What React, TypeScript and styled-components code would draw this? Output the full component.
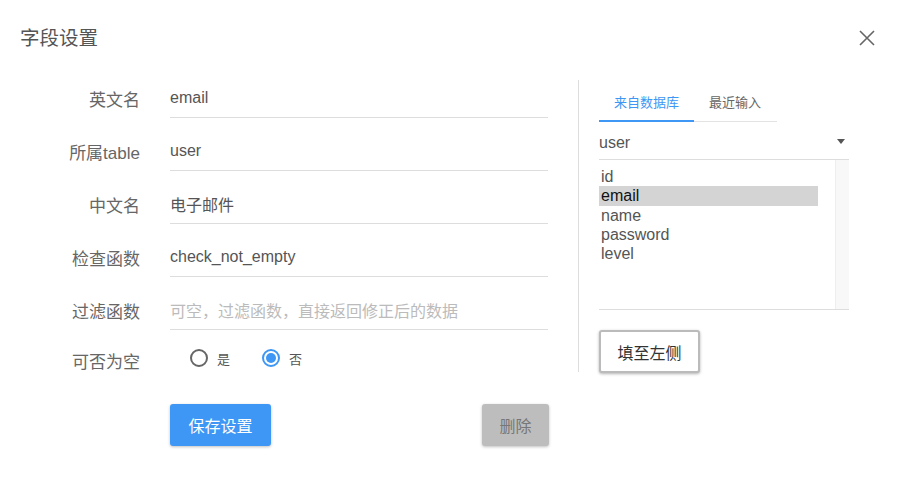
import React from "react";
import styled, { createGlobalStyle } from "styled-components";

const Global = createGlobalStyle`
  html, body { margin: 0; padding: 0; background: #fff; }
  body { font-family: "Liberation Sans", Arial, "Noto Sans CJK SC", sans-serif; }
  * { box-sizing: border-box; }
`;

const BLUE = "#3e97f5";

const Dialog = styled.div`
  width: 898px;
  height: 498px;
  background: #fff;
`;

const Header = styled.div`
  height: 78px;
  display: flex;
  align-items: flex-start;
  justify-content: space-between;
  padding: 26px 22px 0 20px;
`;

const Title = styled.div`
  font-size: 19.5px;
  line-height: 24px;
  color: #555;
`;

const Close = styled.button`
  border: 0;
  background: none;
  padding: 0;
  margin-top: 3px;
  width: 18px;
  height: 18px;
  cursor: pointer;
`;

const Main = styled.div`
  display: flex;
  align-items: flex-start;
`;

const Form = styled.div`
  width: 578px;
  display: flex;
  flex-direction: column;
  gap: 13px;
`;

const Row = styled.div<{ $compact?: boolean }>`
  display: flex;
  align-items: center;
  gap: 30px;
  height: ${(p) => (p.$compact ? "34px" : "40px")};
`;

const Label = styled.div`
  width: 140px;
  text-align: right;
  font-size: 17px;
  color: #666;
`;

const Field = styled.div<{ $placeholder?: boolean }>`
  width: 378px;
  height: 40px;
  border-bottom: 1px solid #ddd;
  display: flex;
  align-items: center;
  padding-top: 1px;
  font-size: 16px;
  color: ${(p) => (p.$placeholder ? "#bbb" : "#555")};
`;

const RadioGroup = styled.div`
  display: flex;
  align-items: center;
  gap: 32px;
  padding-left: 20px;
  margin-top: -4px;
`;

const RadioItem = styled.label`
  display: flex;
  align-items: center;
  gap: 9px;
  font-size: 13px;
  color: #555;
`;

const RadioCircle = styled.span<{ $checked?: boolean }>`
  width: 18px;
  height: 18px;
  border-radius: 50%;
  border: 2px solid ${(p) => (p.$checked ? BLUE : "#666")};
  display: flex;
  align-items: center;
  justify-content: center;
  &::after {
    content: "";
    width: 10px;
    height: 10px;
    border-radius: 50%;
    background: ${(p) => (p.$checked ? BLUE : "transparent")};
  }
`;

const Actions = styled.div`
  margin-top: 14px;
  margin-left: 170px;
  width: 379px;
  display: flex;
  justify-content: space-between;
`;

const Btn = styled.button<{ $primary?: boolean }>`
  height: 42px;
  padding: 0 ${(p) => (p.$primary ? "18.5px" : "17.5px")};
  border: 0;
  border-radius: 3px;
  font-family: inherit;
  font-size: 16px;
  background: ${(p) => (p.$primary ? BLUE : "#bdbdbd")};
  color: ${(p) => (p.$primary ? "#fff" : "#777")};
  box-shadow: 0 1px 3px rgba(0, 0, 0, 0.25);
`;

const Side = styled.div`
  margin-top: 2px;
  height: 292px;
  border-left: 1px solid #ddd;
  padding-left: 20px;
  width: 271px;
`;

const Tabs = styled.div`
  display: flex;
  width: 178px;
  height: 42px;
  border-bottom: 1px solid #e3e3e3;
`;

const Tab = styled.div<{ $active?: boolean }>`
  padding: 0 15px;
  display: flex;
  align-items: center;
  font-size: 13px;
  color: ${(p) => (p.$active ? BLUE : "#666")};
  border-bottom: 2px solid ${(p) => (p.$active ? BLUE : "transparent")};
  margin-bottom: -1px;
  padding-top: 2px;
`;

const Select = styled.div`
  width: 250px;
  height: 38px;
  border-bottom: 1px solid #ddd;
  display: flex;
  align-items: center;
  justify-content: space-between;
  padding: 5px 4px 0 0;
  font-size: 16px;
  color: #555;
`;

const Caret = styled.span`
  width: 0;
  height: 0;
  border-left: 4px solid transparent;
  border-right: 4px solid transparent;
  border-top: 5px solid #555;
  margin-bottom: 4px;
`;

const List = styled.div`
  width: 250px;
  height: 150px;
  border-bottom: 1px solid #ddd;
  display: flex;
`;

const Items = styled.div`
  flex: 1;
  padding-top: 7px;
`;

const Item = styled.div<{ $selected?: boolean }>`
  height: 19.25px;
  line-height: 19px;
  font-size: 16px;
  padding-left: 2px;
  margin-right: 17px;
  color: ${(p) => (p.$selected ? "#111" : "#555")};
  background: ${(p) => (p.$selected ? "#d4d4d4" : "transparent")};
`;

const Track = styled.div`
  width: 14px;
  background: #f8f8f8;
  border-left: 1px solid #eee;
`;

const FillBtn = styled.button`
  margin-top: 20px;
  width: 101px;
  height: 43px;
  border: 2px solid #bbb;
  border-radius: 3px;
  background: #fff;
  font-family: inherit;
  font-size: 16px;
  color: #333;
  box-shadow: 0 1px 3px rgba(0, 0, 0, 0.3);
`;

const fields = [
  { label: "英文名", value: "email" },
  { label: "所属table", value: "user" },
  { label: "中文名", value: "电子邮件" },
  { label: "检查函数", value: "check_not_empty" },
  { label: "过滤函数", value: "可空，过滤函数，直接返回修正后的数据", placeholder: true },
];

const columns = ["id", "email", "name", "password", "level"];

export default function App() {
  return (
    <Dialog>
      <Global />
      <Header>
        <Title>字段设置</Title>
        <Close aria-label="close">
          <svg width="18" height="18" viewBox="0 0 18 18">
            <path d="M2 2 L16 16 M16 2 L2 16" stroke="#666" strokeWidth="1.6" fill="none" />
          </svg>
        </Close>
      </Header>
      <Main>
        <Form>
          {fields.map((f) => (
            <Row key={f.label}>
              <Label>{f.label}</Label>
              <Field $placeholder={f.placeholder}>{f.value}</Field>
            </Row>
          ))}
          <Row $compact>
            <Label>可否为空</Label>
            <RadioGroup>
              <RadioItem>
                <RadioCircle />是
              </RadioItem>
              <RadioItem>
                <RadioCircle $checked />否
              </RadioItem>
            </RadioGroup>
          </Row>
          <Actions>
            <Btn $primary>保存设置</Btn>
            <Btn>删除</Btn>
          </Actions>
        </Form>
        <Side>
          <Tabs>
            <Tab $active>来自数据库</Tab>
            <Tab>最近输入</Tab>
          </Tabs>
          <Select>
            user
            <Caret />
          </Select>
          <List>
            <Items>
              {columns.map((c) => (
                <Item key={c} $selected={c === "email"}>
                  {c}
                </Item>
              ))}
            </Items>
            <Track />
          </List>
          <FillBtn>填至左侧</FillBtn>
        </Side>
      </Main>
    </Dialog>
  );
}
